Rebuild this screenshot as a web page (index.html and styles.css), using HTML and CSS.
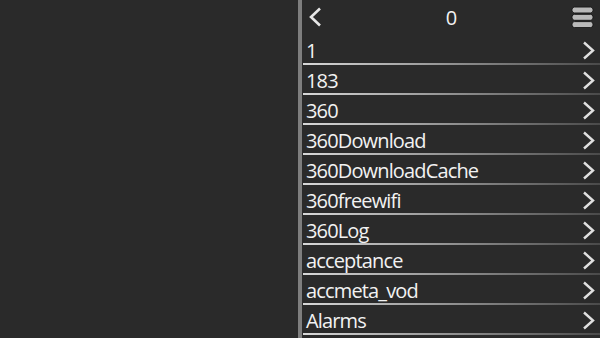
FILE: index.html
```html
<!DOCTYPE html>
<html>
<head>
<meta charset="utf-8">
<link rel="stylesheet" href="styles.css">
</head>
<body>
<div class="screen">
  <div class="left"></div>
  <div class="divider"></div>
  <div class="pane">
    <div class="header">
      <svg class="back" width="13" height="20" viewBox="0 0 13 20"><polyline points="11,1.5 2,10 11,18.5" fill="none" stroke="#e6e6e6" stroke-width="2.6" stroke-linejoin="miter"/></svg>
      <div class="title">0</div>
      <svg class="menu" width="23" height="22" viewBox="0 0 23 22">
        <rect x="1" y="1" width="21" height="6" rx="2.5" fill="#b9b9b9" stroke="#1a1a1a" stroke-width="1"/>
        <rect x="1" y="8.3" width="21" height="6" rx="2.5" fill="#b9b9b9" stroke="#1a1a1a" stroke-width="1"/>
        <rect x="1" y="15.6" width="21" height="6" rx="2.5" fill="#b9b9b9" stroke="#1a1a1a" stroke-width="1"/>
      </svg>
    </div>
    <div class="list">
      <div class="row"><span class="name">1</span><svg class="chev" width="13" height="19" viewBox="0 0 13 19"><polyline points="2,1.5 11,9.5 2,17.5" fill="none" stroke="#e0e0e0" stroke-width="2.4"/></svg></div>
      <div class="row"><span class="name">183</span><svg class="chev" width="13" height="19" viewBox="0 0 13 19"><polyline points="2,1.5 11,9.5 2,17.5" fill="none" stroke="#e0e0e0" stroke-width="2.4"/></svg></div>
      <div class="row"><span class="name">360</span><svg class="chev" width="13" height="19" viewBox="0 0 13 19"><polyline points="2,1.5 11,9.5 2,17.5" fill="none" stroke="#e0e0e0" stroke-width="2.4"/></svg></div>
      <div class="row"><span class="name">360Download</span><svg class="chev" width="13" height="19" viewBox="0 0 13 19"><polyline points="2,1.5 11,9.5 2,17.5" fill="none" stroke="#e0e0e0" stroke-width="2.4"/></svg></div>
      <div class="row"><span class="name">360DownloadCache</span><svg class="chev" width="13" height="19" viewBox="0 0 13 19"><polyline points="2,1.5 11,9.5 2,17.5" fill="none" stroke="#e0e0e0" stroke-width="2.4"/></svg></div>
      <div class="row"><span class="name">360freewifi</span><svg class="chev" width="13" height="19" viewBox="0 0 13 19"><polyline points="2,1.5 11,9.5 2,17.5" fill="none" stroke="#e0e0e0" stroke-width="2.4"/></svg></div>
      <div class="row"><span class="name">360Log</span><svg class="chev" width="13" height="19" viewBox="0 0 13 19"><polyline points="2,1.5 11,9.5 2,17.5" fill="none" stroke="#e0e0e0" stroke-width="2.4"/></svg></div>
      <div class="row"><span class="name">acceptance</span><svg class="chev" width="13" height="19" viewBox="0 0 13 19"><polyline points="2,1.5 11,9.5 2,17.5" fill="none" stroke="#e0e0e0" stroke-width="2.4"/></svg></div>
      <div class="row"><span class="name">accmeta_vod</span><svg class="chev" width="13" height="19" viewBox="0 0 13 19"><polyline points="2,1.5 11,9.5 2,17.5" fill="none" stroke="#e0e0e0" stroke-width="2.4"/></svg></div>
      <div class="row"><span class="name">Alarms</span><svg class="chev" width="13" height="19" viewBox="0 0 13 19"><polyline points="2,1.5 11,9.5 2,17.5" fill="none" stroke="#e0e0e0" stroke-width="2.4"/></svg></div>
    </div>
  </div>
</div>
</body>
</html>
```

FILE: styles.css
```css
html, body {
  margin: 0;
  padding: 0;
  background: #2a2a2a;
}
.screen {
  display: flex;
  width: 600px;
  height: 338px;
  overflow: hidden;
  background: #2a2a2a;
  font-family: "Open Sans", "Noto Sans", sans-serif;
  color: #f2f2f2;
}
.left {
  width: 298px;
  flex: none;
}
.divider {
  width: 4px;
  flex: none;
  background: #7e7e7e;
  margin-right: 1px;
}
.pane {
  flex: 1;
  display: flex;
  flex-direction: column;
}
.header {
  height: 35px;
  flex: none;
  display: grid;
  grid-template-columns: 1fr auto 1fr;
  align-items: center;
  padding: 0 6px 0 6px;
}
.back {
  justify-self: start;
  display: block;
  margin-top: -1px;
}
.title {
  font-size: 20px;
  line-height: 1;
  margin-top: 0;
}
.menu {
  justify-self: end;
  display: block;
  margin-top: -2px;
}
.list {
  display: flex;
  flex-direction: column;
}
.row {
  height: 30px;
  box-sizing: border-box;
  padding: 0 5px 2px 3px;
  display: flex;
  align-items: center;
  justify-content: space-between;
  background: linear-gradient(to right, #d8d8d8, #4a4a4a) no-repeat left bottom / 100% 2px;
}
.name {
  font-size: 20px;
  letter-spacing: -0.85px;
  line-height: 24px;
  padding-top: 4px;
}
.chev {
  display: block;
  margin-top: 3px;
}
```
